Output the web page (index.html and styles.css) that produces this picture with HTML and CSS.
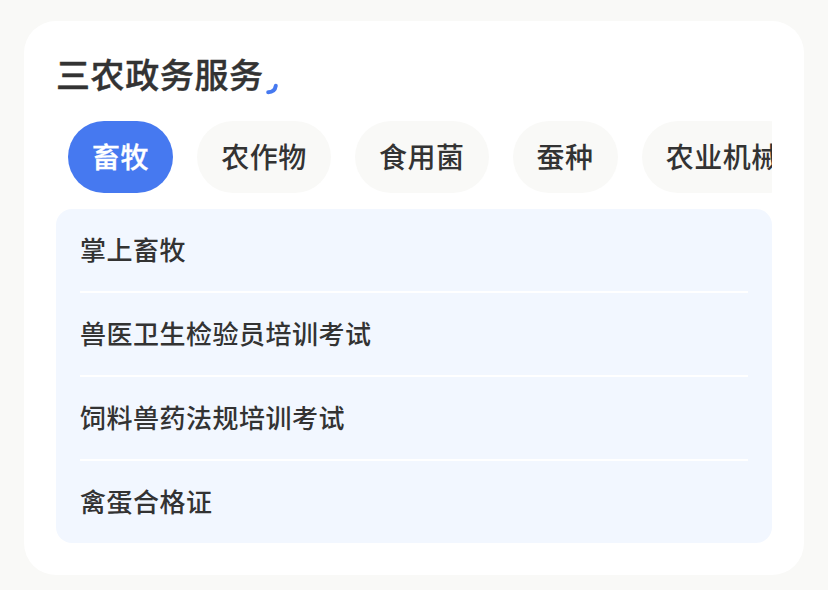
FILE: index.html
```html
<!DOCTYPE html>
<html lang="zh-CN">
<head>
<meta charset="utf-8">
<title>三农政务服务</title>
<link rel="stylesheet" href="styles.css">
</head>
<body>
<section class="card">
  <h2 class="title">三农政务服务<svg class="mark" width="14" height="14" viewBox="0 0 14 14"><path d="M3.2 11.2Q9.8 11.2 10.8 4.8" fill="none" stroke="#4679f0" stroke-width="4" stroke-linecap="round"/></svg></h2>
  <nav class="tabs">
    <span class="tab active">畜牧</span>
    <span class="tab">农作物</span>
    <span class="tab">食用菌</span>
    <span class="tab">蚕种</span>
    <span class="tab">农业机械</span>
  </nav>
  <ul class="list">
    <li>掌上畜牧</li>
    <li>兽医卫生检验员培训考试</li>
    <li>饲料兽药法规培训考试</li>
    <li>禽蛋合格证</li>
  </ul>
</section>
</body>
</html>
```
FILE: styles.css
```css
* { box-sizing: border-box; }
body {
  margin: 0;
  height: 590px;
  overflow: hidden;
  padding: 21px 24px 15px;
  background: #f9f9f7;
  color: #333;
  font-family: "Noto Sans CJK SC", sans-serif;
  font-weight: 500;
}
.card {
  height: 554px;
  padding: 32px;
  border-radius: 32px;
  background: #fff;
}
.title {
  display: flex;
  align-items: flex-end;
  margin: 0;
  height: 44px;
  font-size: 34px;
  line-height: 46px;
  font-weight: 500;
  letter-spacing: 0.6px;
  -webkit-text-stroke: 0.4px #333;
}
.mark { margin: 0 0 2px 1px; }
.tabs {
  display: flex;
  gap: 24px;
  margin-top: 24px;
  padding-left: 12px;
  height: 72px;
  overflow: hidden;
}
.tab {
  flex: none;
  height: 72px;
  padding: 0 24.2px 0 24px;
  border-radius: 36px;
  background: #f9f9f7;
  font-size: 28px;
  line-height: 70px;
  letter-spacing: 0.5px;
}
.active {
  background: #4679f0;
  color: #fff;
  -webkit-text-stroke: 0.3px #fff;
}
.list {
  margin: 16px 0 0;
  padding: 0 24px;
  height: 334px;
  border-radius: 16px;
  background: #f2f7ff;
  list-style: none;
}
.list li {
  height: 84px;
  border-bottom: 2px solid #fff;
  font-size: 26px;
  line-height: 80px;
  letter-spacing: 0.5px;
}
.list li:last-child { border: 0; }
```
